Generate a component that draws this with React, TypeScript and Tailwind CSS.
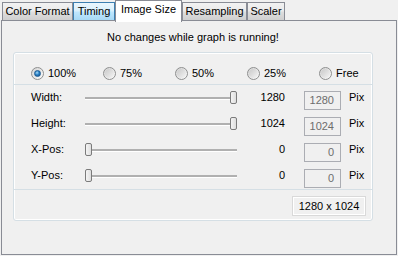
import React from "react";

const tabs = [
  { label: "Color Format", w: "w-[71px]", kind: "normal" },
  { label: "Timing", w: "w-[42px]", kind: "hover" },
  { label: "Image Size", w: "w-[67px]", kind: "active" },
  { label: "Resampling", w: "w-[65px]", kind: "normal" },
  { label: "Scaler", w: "w-[38px]", kind: "normal" },
];

const radios = ["100%", "75%", "50%", "25%", "Free"];

const rows = [
  { label: "Width:", value: "1280", max: true },
  { label: "Height:", value: "1024", max: true },
  { label: "X-Pos:", value: "0", max: false },
  { label: "Y-Pos:", value: "0", max: false },
];

function Tab({ label, w, kind }: { label: string; w: string; kind: string }) {
  if (kind === "active") {
    return (
      <div
        className={`${w} h-[22px] mb-[-2px] relative z-10 border border-b-0 border-[#898c95] bg-white flex justify-center pt-[2px] leading-[13px]`}
      >
        {label}
      </div>
    );
  }
  const look =
    kind === "hover"
      ? "border-[#3c7fb1] bg-[linear-gradient(#eaf6fd_0%,#d9f0fc_45%,#bee6fd_55%,#a7d9f5_100%)]"
      : "border-[#898c95] bg-[linear-gradient(#f2f2f2_0%,#ebebeb_45%,#dddddd_55%,#cfcfcf_100%)]";
  return (
    <div className={`${w} h-[18px] border border-b-0 ${look} flex items-center justify-center leading-[13px]`}>
      {label}
    </div>
  );
}

function Radio({ checked, label }: { checked?: boolean; label: string }) {
  return (
    <div className="w-[72px] shrink-0 flex items-center gap-[4px]">
      <div className="w-[13px] h-[13px] rounded-full border border-[#8e8f8f] bg-[linear-gradient(135deg,#d4d4d4,#fbfbfb)] flex items-center justify-center">
        {checked ? (
          <div className="w-[7px] h-[7px] rounded-full bg-[radial-gradient(circle_at_40%_35%,#a9dcf8_0%,#2b82c7_45%,#0c4a86_100%)] border border-[#1b5a92]" />
        ) : (
          <div className="w-[9px] h-[9px] rounded-full bg-[linear-gradient(135deg,#c9c9c9,#f4f4f4)]" />
        )}
      </div>
      <span className="leading-[13px]">{label}</span>
    </div>
  );
}

function Slider({ max }: { max: boolean }) {
  return (
    <div className="relative w-[152px] h-[13px] mt-[6px]">
      <div className="absolute left-0 right-0 top-[6px] h-[3px] border-t-2 border-[#b0b0b0] bg-white" />
      <div
        className={`absolute top-0 ${max ? "right-0" : "left-0"} w-[7px] h-[13px] rounded-[2px] border border-[#7b7b7b] bg-[linear-gradient(90deg,#f4f4f4,#dedede)]`}
      />
    </div>
  );
}

export default function App() {
  return (
    <div
      className="w-[398px] h-[256px] bg-[#f0f0f0] text-[11px] text-black overflow-hidden"
      style={{ fontFamily: '"Liberation Sans", Arial, sans-serif' }}
    >
      {/* Tab strip */}
      <div className="flex items-end h-[20px] pl-[2px]">
        {tabs.map((t) => (
          <Tab key={t.label} {...t} />
        ))}
      </div>

      {/* Tab page */}
      <div className="ml-[1px] w-[396px] h-[235px] border border-[#898c95] bg-[#f0f0f0] pl-[11px] pt-[10px]">
        <div className="w-[360px]">
          <div className="text-center leading-[13px]">No changes while graph is running!</div>

          <div className="mt-[8px] border border-[#d5dfe5] rounded-[3px] shadow-[inset_0_0_0_1px_#ffffff]">
            {/* Radios */}
            <div className="h-[31px] pl-[17px] pt-[14px] flex items-start">
              {radios.map((r, i) => (
                <Radio key={r} label={r} checked={i === 0} />
              ))}
            </div>
            <div className="h-px bg-[#d5dfe5]" />

            {/* Sliders */}
            {rows.map((row) => (
              <div key={row.label} className="h-[26px] pl-[17px] flex items-start">
                <div className="w-[54px] mt-[6px] leading-[13px]">{row.label}</div>
                <Slider max={row.max} />
                <div className="w-[48px] mt-[6px] leading-[13px] text-right">{row.value}</div>
                <div className="ml-[19px] mt-[6px] w-[37px] h-[19px] border border-[#abadb3] bg-[#f0f0f0] text-[#6d6d6d] text-right pr-[6px] leading-[17px]">
                  {row.value}
                </div>
                <div className="ml-[8px] mt-[6px] leading-[13px]">Pix</div>
              </div>
            ))}
            <div className="h-px bg-[#d5dfe5]" />

            {/* Result size */}
            <div className="h-[30px] flex justify-end items-start pr-[6px] pt-[6px]">
              <div className="w-[74px] h-[20px] border border-[#d9d9d9] shadow-[inset_0_0_0_1px_#ffffff] flex items-center justify-center leading-[13px]">
                1280 x 1024
              </div>
            </div>
          </div>
        </div>
      </div>
    </div>
  );
}
